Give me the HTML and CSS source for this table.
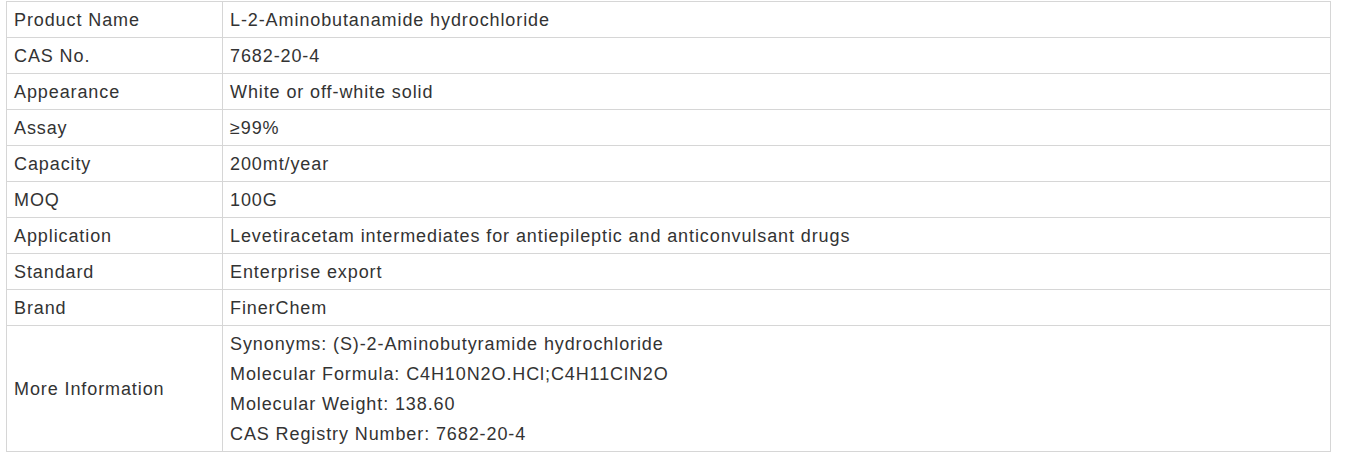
FILE: index.html
```html
<!DOCTYPE html>
<html>
<head>
<meta charset="utf-8">
<link rel="stylesheet" href="styles.css">
</head>
<body>
<table class="spec">
  <tr><td class="k">Product Name</td><td>L-2-Aminobutanamide hydrochloride</td></tr>
  <tr><td class="k">CAS No.</td><td>7682-20-4</td></tr>
  <tr><td class="k">Appearance</td><td>White or off-white solid</td></tr>
  <tr><td class="k">Assay</td><td>≥99%</td></tr>
  <tr><td class="k">Capacity</td><td>200mt/year</td></tr>
  <tr><td class="k">MOQ</td><td>100G</td></tr>
  <tr><td class="k">Application</td><td>Levetiracetam intermediates for antiepileptic and anticonvulsant drugs</td></tr>
  <tr><td class="k">Standard</td><td>Enterprise export</td></tr>
  <tr><td class="k">Brand</td><td>FinerChem</td></tr>
  <tr><td class="k">More Information</td><td>Synonyms: (S)-2-Aminobutyramide hydrochloride<br>Molecular Formula: C4H10N2O.HCl;C4H11ClN2O<br>Molecular Weight: 138.60<br>CAS Registry Number: 7682-20-4</td></tr>
</table>
</body>
</html>
```
FILE: styles.css
```css
html, body {
  margin: 0;
  padding: 0;
  background: #fff;
}
body {
  padding: 1px 0 0 6px;
  font-family: "Liberation Sans", Arial, sans-serif;
  font-size: 18px;
  letter-spacing: 0.9px;
  color: #333;
}
.spec {
  border-collapse: collapse;
  width: 1325px;
}
.spec td {
  border: 1px solid #d6d6d6;
  padding: 3px 7px 2px 7px;
  line-height: 30px;
  vertical-align: middle;
  text-align: left;
}
.spec td.k {
  width: 201px;
}
```
